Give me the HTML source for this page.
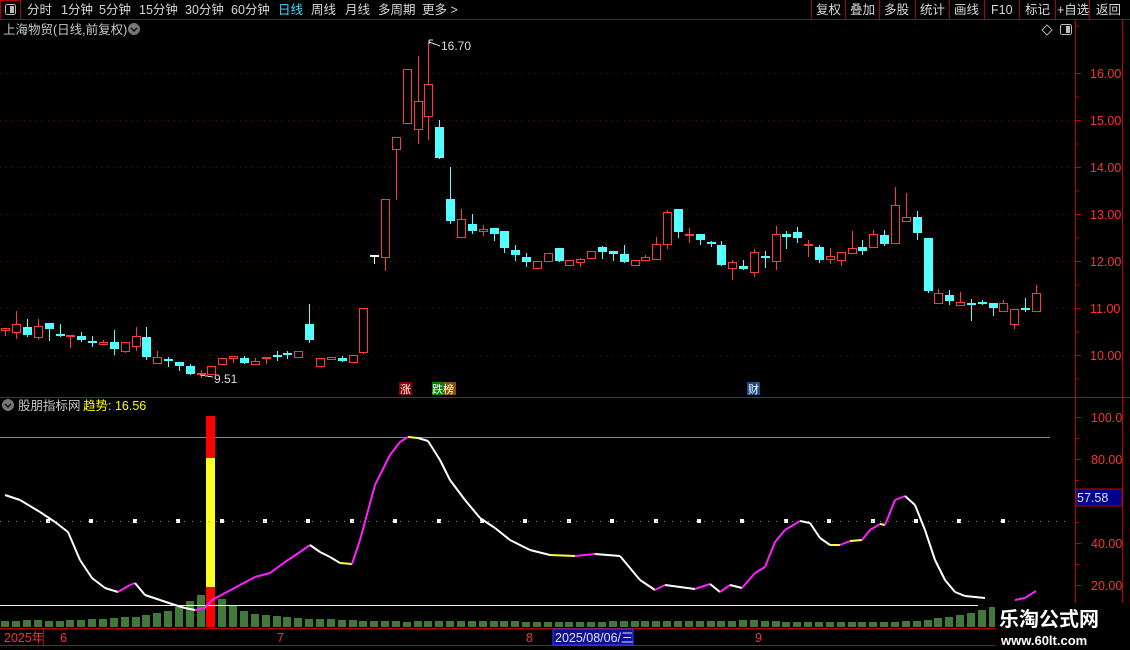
<!DOCTYPE html>
<html><head><meta charset="utf-8">
<style>
html,body{margin:0;padding:0;background:#000;width:1130px;height:650px;overflow:hidden}
svg{display:block}
text{font-family:"Liberation Sans","Noto Sans CJK SC",sans-serif}
</style></head><body>
<svg id="s" width="1130" height="650" xmlns="http://www.w3.org/2000/svg" shape-rendering="crispEdges">
<rect width="1130" height="650" fill="#000"/>
<line x1="0" y1="19.5" x2="1130" y2="19.5" stroke="#b00000"/>
<rect x="0.5" y="0.5" width="20" height="19" fill="none" stroke="#b00000"/>
<rect x="5.5" y="4.5" width="10" height="10" rx="2" fill="none" stroke="#bbb"/>
<rect x="10" y="6" width="4" height="7" fill="#bbb"/>
<g font-size="12.5" fill="#d8d8d8">
<text x="27" y="14">分时</text><text x="61" y="14">1分钟</text><text x="99" y="14">5分钟</text>
<text x="139" y="14">15分钟</text><text x="185" y="14">30分钟</text><text x="231" y="14">60分钟</text>
<text x="278" y="14" fill="#40e0ff">日线</text><text x="311" y="14">周线</text><text x="345" y="14">月线</text>
<text x="378" y="14">多周期</text><text x="422" y="14">更多 &gt;</text>
<text x="816" y="14">复权</text><text x="850" y="14">叠加</text><text x="884" y="14">多股</text>
<text x="920" y="14">统计</text><text x="954" y="14">画线</text><text x="991" y="14">F10</text>
<text x="1025" y="14">标记</text><text x="1057" y="14">+自选</text><text x="1096" y="14">返回</text>
</g>
<g stroke="#b00000"><line x1="811.5" y1="0" x2="811.5" y2="19"/><line x1="845.5" y1="0" x2="845.5" y2="19"/><line x1="879.5" y1="0" x2="879.5" y2="19"/><line x1="915.5" y1="0" x2="915.5" y2="19"/><line x1="949.5" y1="0" x2="949.5" y2="19"/><line x1="984.5" y1="0" x2="984.5" y2="19"/><line x1="1019.5" y1="0" x2="1019.5" y2="19"/><line x1="1055.5" y1="0" x2="1055.5" y2="19"/><line x1="1089.5" y1="0" x2="1089.5" y2="19"/></g>
<text x="3" y="34" font-size="12.5" fill="#c8c8c8">上海物贸(日线,前复权)</text>
<circle cx="134" cy="29" r="6" fill="#777"/><path d="M131 28 L134 31 L137 28" stroke="#222" stroke-width="1.5" fill="none"/>
<path d="M1047 25 L1052 30 L1047 35 L1042 30 Z" fill="none" stroke="#aaa"/>
<rect x="1060.5" y="24.5" width="11" height="10" rx="2" fill="none" stroke="#bbb"/><rect x="1066" y="26" width="4" height="7" fill="#bbb"/>
<line x1="1075.5" y1="20" x2="1075.5" y2="628" stroke="#c00000" stroke-width="1"/>
<line x1="1122.5" y1="20" x2="1122.5" y2="628" stroke="#c00000"/>
<line x1="0" y1="397.5" x2="1130" y2="397.5" stroke="#c00000"/>
<line x1="0" y1="628.5" x2="1130" y2="628.5" stroke="#c00000"/>
<line x1="0" y1="645.5" x2="1130" y2="645.5" stroke="#c00000"/>
<g id="g"></g>
<circle cx="8" cy="405" r="6" fill="#777"/><path d="M5 404 L8 407 L11 404" stroke="#222" stroke-width="1.5" fill="none"/>
<text x="18" y="410" font-size="12.5" fill="#c8c8c8">股朋指标网</text>
<text x="83" y="410" font-size="12.5" fill="#ffff00">趋势: 16.56</text>
<rect x="1076" y="489" width="46" height="17" fill="#00008a" stroke="#c00000"/>
<text x="1077" y="502" font-size="12.5" fill="#e0e0ff">57.58</text>
<g font-size="12.5" fill="#ff3030">
<text x="4" y="642">2025年</text><text x="60" y="642">6</text><text x="277" y="642">7</text><text x="526" y="642">8</text><text x="755" y="642">9</text>
</g>
<line x1="43.5" y1="628" x2="43.5" y2="645" stroke="#c00000"/>
<rect x="553" y="629" width="80" height="16" fill="#101090" stroke="#3040ff"/>
<text x="555" y="642" font-size="12.5" fill="#e0e0ff">2025/08/06/三</text>
<rect x="399" y="382" width="13" height="13" fill="#8a0000"/><text x="400" y="393" font-size="11" fill="#fff">涨</text>
<rect x="432" y="382" width="12" height="13" fill="#008000"/><rect x="444" y="382" width="12" height="13" fill="#8a4a00"/><text x="432" y="393" font-size="11" fill="#fff">跌榜</text>
<rect x="747" y="382" width="13" height="13" fill="#1a4a8a"/><text x="748" y="393" font-size="11" fill="#fff">财</text>
<text x="441" y="50" font-size="12" fill="#ddd">16.70</text>
<path d="M429 42 L440 46" stroke="#ddd"/><path d="M429 40 h4 M429 40 v4" stroke="#ddd"/>
<text x="214" y="383" font-size="12" fill="#ddd">9.51</text>
<path d="M200 375 L213 377" stroke="#ddd"/>
<rect x="995" y="603" width="135" height="47" fill="#000"/>
<text x="999" y="626" font-size="20" font-weight="bold" fill="#fff" font-family="'Noto Sans CJK SC',sans-serif">乐淘公式网</text>
<text x="1001" y="645" font-size="13" font-weight="bold" fill="#fff" font-family="'Liberation Serif',serif">www.60lt.com</text>
</svg>
<script>
var g=document.getElementById('g'),h='';
function L(x1,y1,x2,y2,c,w,d){h+='<line x1="'+x1+'" y1="'+y1+'" x2="'+x2+'" y2="'+y2+'" stroke="'+c+'"'+(w?' stroke-width="'+w+'"':'')+(d?' stroke-dasharray="'+d+'"':'')+'/>';}
for(var p=16;p>=10;p--){var y=73+(16-p)*47;L(0,y+.5,1075,y+.5,'#8a0000',1,'1 5');h+='<text x="1090" y="'+(y+5)+'" font-size="12.5" fill="#ff3030">'+p.toFixed(2)+'</text>';L(1075,y+.5,1081,y+.5,'#c00000');L(1075,y+24,1079,y+24,'#c00000');}
L(1075,26,1079,26,'#c00000');
var C=[[328,328,330,335,'r'],[311,324,332,338,'r'],[319,327,335,336,'c'],[319,326,337,339,'r'],[323,323,329,340,'c'],[324,334,334,336,'c'],[336,336,336,347,'r'],[332,336,340,341,'c'],[336,341,343,346,'c'],[340,342,344,344,'r'],[330,342,349,354,'c'],[342,342,351,352,'r'],[327,336,346,350,'r'],[327,337,357,359,'c'],[351,357,363,363,'r'],[357,359,361,366,'c'],[362,362,366,370,'c'],[364,366,374,374,'c'],[370,374,374,377,'r'],[366,366,374,374,'r'],[358,358,364,364,'r'],[356,356,358,362,'r'],[356,358,363,363,'c'],[358,361,364,364,'r'],[358,358,358,363,'r'],[351,355,357,360,'c'],[351,353,355,358,'c'],[351,351,357,357,'r'],[304,324,340,342,'c'],[358,358,366,366,'r'],[357,357,359,359,'r'],[356,358,361,361,'c'],[355,355,362,362,'r'],[308,308,352,353,'r'],[256,256,256,263,'w'],[199,199,257,270,'r'],[137,137,149,199,'r'],[69,69,123,123,'r'],[56,101,129,143,'r'],[43,84,116,139,'r'],[120,127,158,158,'c'],[167,199,221,223,'c'],[209,219,237,237,'r'],[214,224,231,233,'c'],[225,229,231,235,'r'],[228,228,234,240,'c'],[231,231,248,252,'c'],[245,250,255,260,'c'],[253,257,262,266,'c'],[261,261,268,268,'r'],[253,253,261,261,'r'],[248,248,261,261,'c'],[260,260,265,265,'r'],[258,259,262,266,'r'],[251,251,258,258,'r'],[246,247,252,258,'c'],[251,251,254,260,'c'],[245,254,262,262,'c'],[260,260,265,265,'r'],[255,257,260,260,'r'],[237,244,259,259,'r'],[210,212,244,248,'r'],[209,209,232,237,'c'],[228,235,235,242,'r'],[234,234,240,244,'c'],[241,242,242,246,'c'],[241,245,265,265,'c'],[260,262,268,279,'r'],[260,266,269,269,'c'],[249,252,272,276,'r'],[251,256,256,267,'c'],[226,234,261,269,'r'],[231,234,237,248,'c'],[227,232,238,242,'c'],[240,245,245,256,'r'],[245,247,260,262,'c'],[248,256,259,263,'r'],[252,252,260,265,'r'],[231,248,253,253,'r'],[240,247,251,254,'c'],[230,234,247,247,'r'],[230,235,244,245,'c'],[187,205,243,243,'r'],[193,217,221,221,'r'],[211,217,233,239,'c'],[238,238,291,292,'c'],[289,293,303,303,'r'],[290,295,301,304,'c'],[292,302,305,305,'r'],[299,303,303,320,'c'],[300,302,304,304,'c'],[303,303,308,315,'c'],[300,303,311,311,'r'],[309,309,324,328,'r'],[298,308,310,311,'c'],[285,293,311,311,'r']];
var col={r:'#ff3a3a',c:'#54ffff',w:'#ffffff'};
function X(i){return 5.3+i*10.85;}
C.forEach(function(c,i){var x=Math.round(X(i)),k=col[c[4]];
 h+='<rect x="'+x+'" y="'+c[0]+'" width="1" height="'+(c[3]-c[0]+1)+'" fill="'+k+'"/>';
 var hh=c[2]-c[1];
 if(c[4]=='c'){h+='<rect x="'+(x-4)+'" y="'+c[1]+'" width="9" height="'+Math.max(hh,2)+'" fill="'+k+'"/>';}
 else if(hh<2){h+='<rect x="'+(x-4)+'" y="'+(c[1]-1)+'" width="9" height="2" fill="'+k+'"/>';}
 else{h+='<rect x="'+(x-4)+'" y="'+c[1]+'" width="9" height="'+(hh+1)+'" fill="'+k+'"/><rect x="'+(x-3)+'" y="'+(c[1]+1)+'" width="7" height="'+(hh-1)+'" fill="#000"/>';}
});
[[100,417,'100.0'],[80,459,'80.00'],[40,543,'40.00'],[20,585,'20.00']].forEach(function(a){h+='<text x="1091" y="'+(a[1]+5)+'" font-size="12.5" fill="#ff3030">'+a[2]+'</text>';L(1075,a[1]+.5,1081,a[1]+.5,'#c00000');});
[438,480,522,564,606].forEach(function(y){L(1075,y+.5,1079,y+.5,'#c00000');});
L(0,437.5,1050,437.5,'#888');
var V=[6,6,7,7,6,6,7,7,8,8,9,10,10,12,14,16,20,26,32,37,28,22,16,13,12,11,10,9,8,8,8,7,7,6,6,6,6,5,6,6,6,6,6,6,6,6,6,6,5,5,5,5,5,5,5,5,6,6,6,6,6,6,6,6,6,6,6,6,7,7,6,6,5,5,5,5,5,5,5,5,5,5,5,6,6,7,9,10,12,14,17,20,22];
V.forEach(function(v,i){var x=Math.round(X(i));if(i==19)return;h+='<rect x="'+(x-4)+'" y="'+(627-v)+'" width="8" height="'+v+'" fill="#3f7a3a"/>';});
h+='<rect x="206" y="416" width="9" height="42" fill="#ff0000"/><rect x="206" y="458" width="9" height="129" fill="#ffff20"/><rect x="206" y="587" width="9" height="40" fill="#ff0000"/>';
L(0,605.5,978,605.5,'#ffff60');
for(var x=48;x<1040;x+=43.4){h+='<rect x="'+(Math.round(x)-2)+'" y="519" width="4" height="4" fill="#fff"/>';}
for(var x=0;x<1070;x+=8){h+='<rect x="'+x+'" y="521" width="1" height="1" fill="#888"/>';}
var P=[[5,495],[20,500],[40,512],[55,522],[68,532],[80,560],[92,578],[105,588],[118,592],[130,585],[135,583],[145,595],[160,600],[175,605],[185,608],[195,610],[205,608],[212,600],[225,593],[240,585],[255,577],[270,573],[285,562],[300,552],[310,545],[320,552],[330,557],[340,563],[352,564],[360,540],[375,485],[390,455],[400,442],[408,437],[418,438],[428,441],[440,460],[450,480],[465,500],[480,518],[495,528],[510,540],[530,550],[550,555],[575,556],[595,554],[620,556],[630,568],[640,580],[655,590],[665,585],[680,587],[695,589],[710,584],[720,592],[730,585],[742,588],[755,573],[765,567],[775,542],[785,530],[800,521],[810,523],[820,538],[830,545],[840,545],[850,541],[862,540],[870,530],[880,524],[885,525],[895,500],[905,496],[915,505],[925,530],[935,560],[945,580],[955,592],[965,596],[985,598]];
var s='';
for(var i=1;i<P.length;i++){var a=P[i-1],b=P[i];var c=b[1]<a[1]-1?'#ff20ff':(b[1]>a[1]+1?'#ffffff':'#ffff40');s+='<line x1="'+a[0]+'" y1="'+a[1]+'" x2="'+b[0]+'" y2="'+b[1]+'" stroke="'+c+'" stroke-width="2" shape-rendering="auto"/>';}
h+=s;
L(1015,600,1025,598,'#ff20ff',2);L(1025,598,1036,591,'#ff20ff',2);
[61,118,175,232,350,420,485].forEach(function(x){L(x,628,x,631,'#c00000');});
g.innerHTML=h;
</script>
</body></html>
